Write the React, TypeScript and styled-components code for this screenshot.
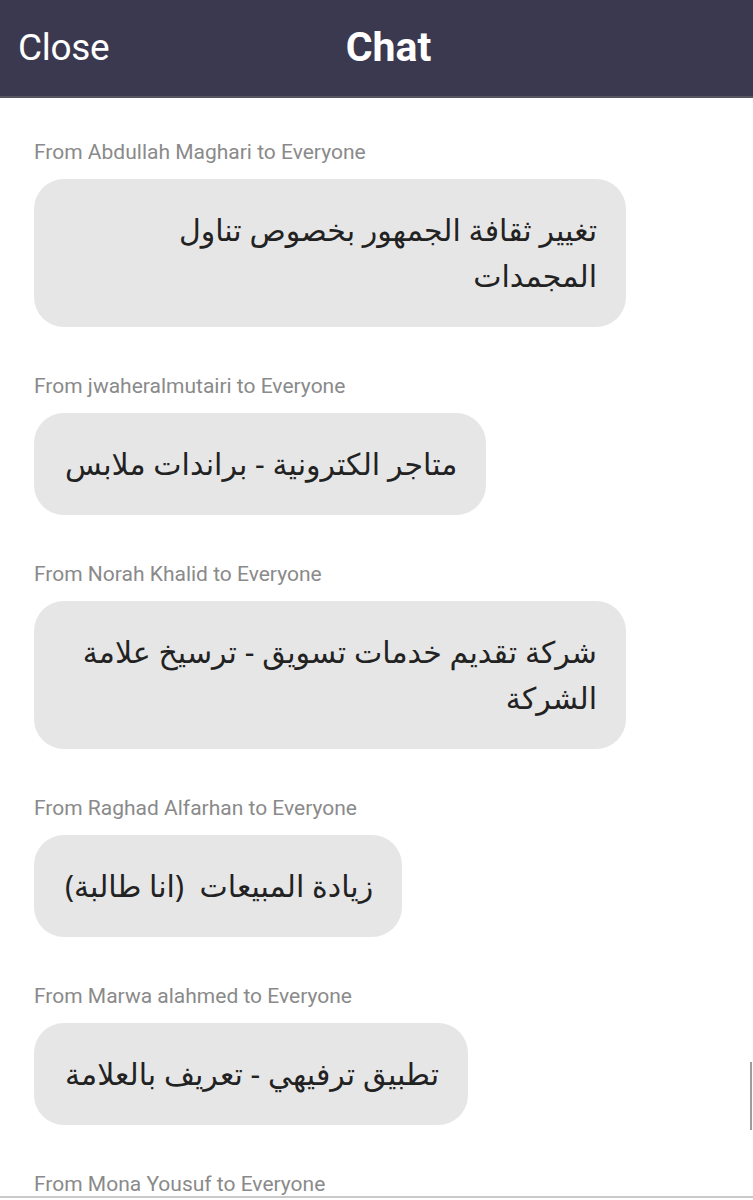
import React from "react";
import styled, { createGlobalStyle } from "styled-components";

const Global = createGlobalStyle`
  html, body { margin: 0; padding: 0; background: #ffffff; }
  body { font-family: Roboto, "Liberation Sans", sans-serif; overflow: hidden; }
  * { box-sizing: border-box; }
`;

const Screen = styled.div`
  width: 753px;
  height: 1200px;
  display: flex;
  flex-direction: column;
  background: #ffffff;
  position: relative;
  overflow: hidden;
`;

const Header = styled.header`
  height: 98px;
  flex: 0 0 98px;
  background: #3b394f;
  border-bottom: 2px solid #56545f;
  display: grid;
  grid-template-columns: 1fr auto 1fr;
  align-items: center;
  padding: 0 18px 2px 18px;
`;

const CloseButton = styled.span`
  font-family: Roboto, "Liberation Sans", sans-serif;
  font-size: 37px;
  letter-spacing: -0.3px;
  color: #ffffff;
  font-weight: 400;
  justify-self: start;
`;

const Title = styled.h1`
  margin: 0;
  font-family: Roboto, "Liberation Sans", sans-serif;
  font-size: 41px;
  font-weight: 700;
  color: #ffffff;
  padding-left: 24px;
`;

const Feed = styled.main`
  flex: 1;
  overflow: hidden;
  padding: 42px 34px 0 34px;
  display: flex;
  flex-direction: column;
  border-bottom: 2px solid #c9c9c9;
  margin-bottom: 2px;
`;

const Message = styled.section`
  display: flex;
  flex-direction: column;
  align-items: flex-start;
  margin-bottom: 47px;
`;

const Sender = styled.div`
  font-family: Roboto, "Liberation Sans", sans-serif;
  font-size: 21px;
  line-height: 24px;
  color: #8a8a8a;
  margin-bottom: 15px;
  white-space: nowrap;
`;

const Bubble = styled.div`
  max-width: 592px;
  background: #e6e6e6;
  border-radius: 30px;
  padding: 28px 29px 28px 31px;
  direction: rtl;
  text-align: right;
  white-space: pre-wrap;
  font-family: "Noto Sans", "DejaVu Sans", sans-serif;
  font-size: 30px;
  line-height: 46px;
  color: #222222;
`;

const ScrollThumb = styled.div`
  position: absolute;
  right: 1px;
  top: 1062px;
  width: 2px;
  height: 68px;
  background: #9d9d9d;
`;

const messages = [
  { from: "Abdullah Maghari", text: "تغيير ثقافة الجمهور بخصوص تناول المجمدات" },
  { from: "jwaheralmutairi", text: "متاجر الكترونية - براندات ملابس" },
  { from: "Norah Khalid", text: "شركة تقديم خدمات تسويق - ترسيخ علامة الشركة" },
  { from: "Raghad Alfarhan", text: "زيادة المبيعات  (انا طالبة)" },
  { from: "Marwa alahmed", text: "تطبيق ترفيهي - تعريف بالعلامة" },
  { from: "Mona Yousuf", text: "" },
];

export default function App() {
  return (
    <>
      <Global />
      <Screen>
        <Header>
          <CloseButton>Close</CloseButton>
          <Title>Chat</Title>
          <span />
        </Header>
        <Feed>
          {messages.map((m, i) => (
            <Message key={i}>
              <Sender>From {m.from} to Everyone</Sender>
              {m.text && <Bubble>{m.text}</Bubble>}
            </Message>
          ))}
        </Feed>
        <ScrollThumb />
      </Screen>
    </>
  );
}
